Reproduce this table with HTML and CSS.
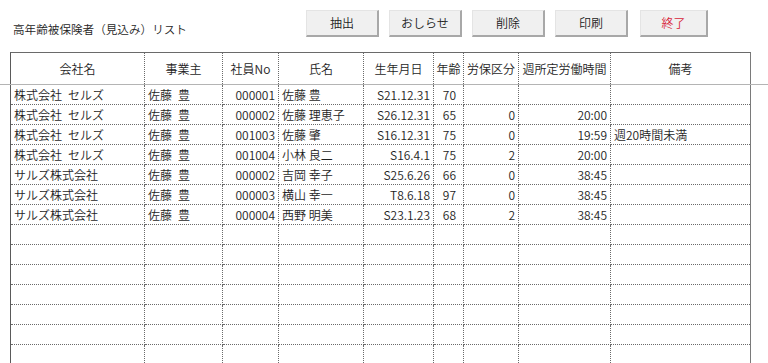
FILE: index.html
```html
<!DOCTYPE html>
<html lang="ja">
<head>
<meta charset="utf-8">
<title>高年齢被保険者（見込み）リスト</title>
<link rel="stylesheet" href="styles.css">
</head>
<body>
<div class="topbar">
  <div class="title">高年齢被保険者（見込み）リスト</div>
  <div class="buttons">
    <button class="btn">抽出</button>
    <button class="btn">おしらせ</button>
    <button class="btn">削除</button>
    <button class="btn">印刷</button>
    <button class="btn btn-exit">終了</button>
  </div>
</div>
<div class="head-band">
  <div class="grid grid-head">
    <div class="hc">会社名</div>
    <div class="hc">事業主</div>
    <div class="hc">社員No</div>
    <div class="hc">氏名</div>
    <div class="hc">生年月日</div>
    <div class="hc">年齢</div>
    <div class="hc">労保区分</div>
    <div class="hc">週所定労働時間</div>
    <div class="hc">備考</div>
  </div>
</div>
<div class="grid grid-body">
  <div class="c">株式会社&ensp;セルズ</div><div class="c">佐藤&ensp;豊</div><div class="c r">000001</div><div class="c">佐藤 豊</div><div class="c r">S21.12.31</div><div class="c r age">70</div><div class="c r"></div><div class="c r"></div><div class="c"></div>
  <div class="c">株式会社&ensp;セルズ</div><div class="c">佐藤&ensp;豊</div><div class="c r">000002</div><div class="c">佐藤 理恵子</div><div class="c r">S26.12.31</div><div class="c r age">65</div><div class="c r">0</div><div class="c r">20:00</div><div class="c"></div>
  <div class="c">株式会社&ensp;セルズ</div><div class="c">佐藤&ensp;豊</div><div class="c r">001003</div><div class="c">佐藤 肇</div><div class="c r">S16.12.31</div><div class="c r age">75</div><div class="c r">0</div><div class="c r">19:59</div><div class="c">週20時間未満</div>
  <div class="c">株式会社&ensp;セルズ</div><div class="c">佐藤&ensp;豊</div><div class="c r">001004</div><div class="c">小林 良二</div><div class="c r">S16.4.1</div><div class="c r age">75</div><div class="c r">2</div><div class="c r">20:00</div><div class="c"></div>
  <div class="c">サルズ株式会社</div><div class="c">佐藤&ensp;豊</div><div class="c r">000002</div><div class="c">吉岡 幸子</div><div class="c r">S25.6.26</div><div class="c r age">66</div><div class="c r">0</div><div class="c r">38:45</div><div class="c"></div>
  <div class="c">サルズ株式会社</div><div class="c">佐藤&ensp;豊</div><div class="c r">000003</div><div class="c">横山 幸一</div><div class="c r">T8.6.18</div><div class="c r age">97</div><div class="c r">0</div><div class="c r">38:45</div><div class="c"></div>
  <div class="c">サルズ株式会社</div><div class="c">佐藤&ensp;豊</div><div class="c r">000004</div><div class="c">西野 明美</div><div class="c r">S23.1.23</div><div class="c r age">68</div><div class="c r">2</div><div class="c r">38:45</div><div class="c"></div>
  <div class="c"></div><div class="c"></div><div class="c"></div><div class="c"></div><div class="c"></div><div class="c"></div><div class="c"></div><div class="c"></div><div class="c"></div>
  <div class="c"></div><div class="c"></div><div class="c"></div><div class="c"></div><div class="c"></div><div class="c"></div><div class="c"></div><div class="c"></div><div class="c"></div>
  <div class="c"></div><div class="c"></div><div class="c"></div><div class="c"></div><div class="c"></div><div class="c"></div><div class="c"></div><div class="c"></div><div class="c"></div>
  <div class="c"></div><div class="c"></div><div class="c"></div><div class="c"></div><div class="c"></div><div class="c"></div><div class="c"></div><div class="c"></div><div class="c"></div>
  <div class="c"></div><div class="c"></div><div class="c"></div><div class="c"></div><div class="c"></div><div class="c"></div><div class="c"></div><div class="c"></div><div class="c"></div>
  <div class="c"></div><div class="c"></div><div class="c"></div><div class="c"></div><div class="c"></div><div class="c"></div><div class="c"></div><div class="c"></div><div class="c"></div>
  <div class="c"></div><div class="c"></div><div class="c"></div><div class="c"></div><div class="c"></div><div class="c"></div><div class="c"></div><div class="c"></div><div class="c"></div>
  <div class="c"></div><div class="c"></div><div class="c"></div><div class="c"></div><div class="c"></div><div class="c"></div><div class="c"></div><div class="c"></div><div class="c"></div>
</div>
</body>
</html>
```

FILE: styles.css
```css
html, body {
  margin: 0;
  padding: 0;
  height: 363px;
  overflow: hidden;
  background: #ffffff;
}
body {
  font-family: "Noto Sans CJK JP", "Noto Sans", sans-serif;
  font-size: 12px;
  font-weight: 350;
  color: #1e1e1e;
}
.topbar {
  display: flex;
  align-items: flex-start;
  height: 52px;
  box-sizing: border-box;
  padding-top: 10px;
}
.title {
  width: 306px;
  padding-left: 13px;
  box-sizing: border-box;
  margin-top: 11px;
  font-size: 11.6px;
  line-height: 16px;
  white-space: nowrap;
}
.buttons {
  display: flex;
  gap: 10px;
}
.btn {
  width: 73px;
  height: 27px;
  padding: 0;
  box-sizing: border-box;
  background: #f0f0f0;
  border: 1px solid #e4e4e4;
  border-right: 2px solid #a8a8a8;
  border-bottom: 2px solid #a8a8a8;
  font-family: inherit;
  font-weight: 350;
  font-size: 12px;
  line-height: 16px;
  color: #222;
}
.btn-exit {
  width: 68px;
  margin-left: 2px;
  color: #d8263a;
}
.head-band {
  border-bottom: 1px solid #b4b4b4;
}
.grid {
  display: grid;
  grid-template-columns: 134px 78px 56px 85px 70px 30px 55px 92px 139px;
  margin-left: 10px;
  width: 741px;
  box-sizing: border-box;
  border-left: 1px solid #5a5a5a;
  border-right: 1px solid #7a7a7a;
}
.grid-head {
  border-top: 1px solid #6a6a6a;
}
.hc {
  height: 31px;
  display: flex;
  align-items: center;
  justify-content: center;
  border-right: 1px dotted #6a6a6a;
  line-height: 16px;
  white-space: nowrap;
}
.hc:nth-child(9n) {
  border-right: none;
}
.c {
  height: 20px;
  box-sizing: border-box;
  border-right: 1px dotted #6a6a6a;
  border-bottom: 1px dotted #6a6a6a;
  line-height: 19px;
  padding: 0 2px 0 3px;
  white-space: nowrap;
  overflow: hidden;
}
.c:nth-child(9n) {
  border-right: none;
}
.r {
  text-align: right;
  padding-right: 3px;
}
.age {
  padding-right: 7px;
}
```
